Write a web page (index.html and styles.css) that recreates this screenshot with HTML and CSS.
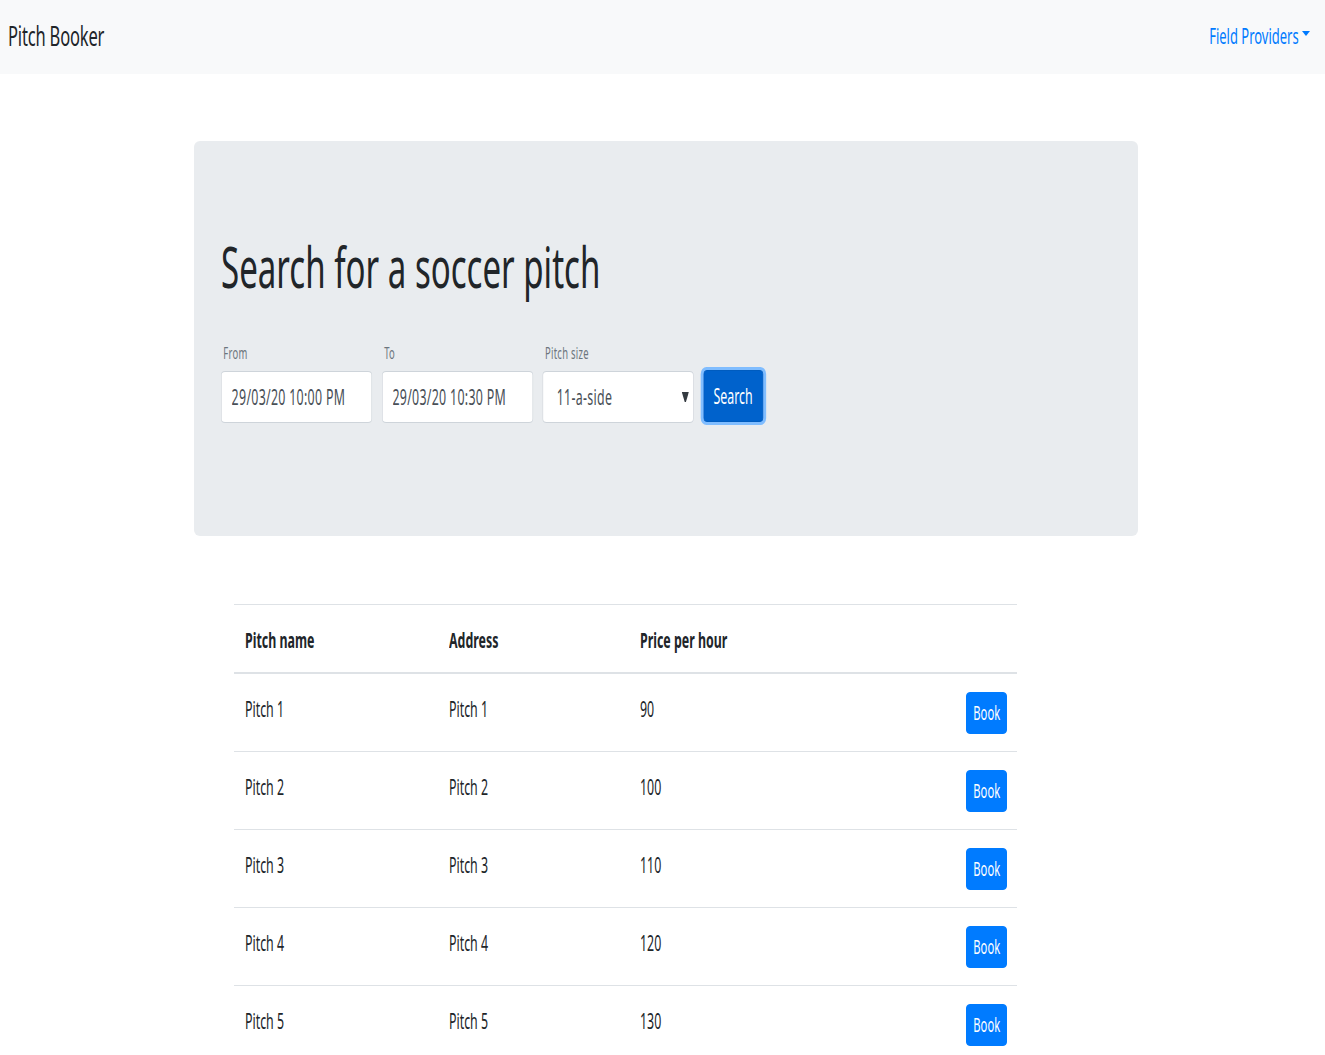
FILE: index.html
```html
<!DOCTYPE html>
<html lang="en">
<head>
<meta charset="utf-8">
<title>Pitch Booker</title>
<link rel="stylesheet" href="styles.css">
</head>
<body>
<nav class="navbar">
  <a class="brand" href="#"><span class="sx">Pitch Booker</span></a>
  <a class="nav-link" href="#"><span class="sx sx-r">Field Providers</span><span class="caret"></span></a>
</nav>
<main class="container">
  <section class="jumbotron">
    <h1 class="display"><span class="sx">Search for a soccer pitch</span></h1>
    <form class="search-form">
      <div class="field">
        <label class="field-label">From</label>
        <input class="field-input" type="text" value="29/03/20 10:00 PM">
      </div>
      <div class="field">
        <label class="field-label">To</label>
        <input class="field-input" type="text" value="29/03/20 10:30 PM">
      </div>
      <div class="field">
        <label class="field-label">Pitch size</label>
        <div class="select-wrap">
          <select class="field-input field-select">
            <option>11-a-side</option>
          </select>
          <svg class="select-arrow" width="12" height="10" viewBox="0 0 12 10"><path d="M0 0 H12 L7 10 H5 Z" fill="#343a40"/></svg>
        </div>
      </div>
      <button class="btn-search" type="button">Search</button>
    </form>
  </section>
  <table class="pitch-table">
    <thead>
      <tr>
        <th class="col-name"><span class="sx">Pitch name</span></th>
        <th class="col-addr"><span class="sx">Address</span></th>
        <th class="col-price"><span class="sx">Price per hour</span></th>
        <th class="col-action"></th>
      </tr>
    </thead>
    <tbody>
      <tr><td><span class="sx">Pitch 1</span></td><td><span class="sx">Pitch 1</span></td><td><span class="sx">90</span></td><td class="action"><button class="btn-book" type="button"><span class="sx sx-c">Book</span></button></td></tr>
      <tr><td><span class="sx">Pitch 2</span></td><td><span class="sx">Pitch 2</span></td><td><span class="sx">100</span></td><td class="action"><button class="btn-book" type="button"><span class="sx sx-c">Book</span></button></td></tr>
      <tr><td><span class="sx">Pitch 3</span></td><td><span class="sx">Pitch 3</span></td><td><span class="sx">110</span></td><td class="action"><button class="btn-book" type="button"><span class="sx sx-c">Book</span></button></td></tr>
      <tr><td><span class="sx">Pitch 4</span></td><td><span class="sx">Pitch 4</span></td><td><span class="sx">120</span></td><td class="action"><button class="btn-book" type="button"><span class="sx sx-c">Book</span></button></td></tr>
      <tr><td><span class="sx">Pitch 5</span></td><td><span class="sx">Pitch 5</span></td><td><span class="sx">130</span></td><td class="action"><button class="btn-book" type="button"><span class="sx sx-c">Book</span></button></td></tr>
    </tbody>
  </table>
</main>
</body>
</html>
```

FILE: styles.css
```css
/* The reference shows type horizontally condensed (x factor 0.59);
   no condensed face is installed, so text is narrowed with scaleX. */
* { box-sizing: border-box; }
html, body { margin: 0; padding: 0; }
body {
  font-family: "Noto Sans", "Open Sans", sans-serif;
  color: #212529;
  background: #fff;
}
.sx {
  display: inline-block;
  transform: scaleX(0.59);
  transform-origin: 0 50%;
  white-space: nowrap;
}
.sx-r { transform-origin: 100% 50%; }
.sx-c { transform-origin: 50% 50%; }

.navbar {
  height: 74px;
  background: #f8f9fa;
  display: flex;
  align-items: center;
  justify-content: space-between;
  padding: 0 15px 4px 8px;
}
.brand {
  font-size: 28px;
  letter-spacing: -0.3px;
  color: #212529;
  text-decoration: none;
}
.nav-link {
  font-size: 22px;
  color: #007bff;
  text-decoration: none;
  display: flex;
  align-items: center;
}
.caret {
  display: inline-block;
  margin-left: 3px;
  margin-top: -3px;
  width: 0;
  height: 0;
  border-top: 5px solid #007bff;
  border-left: 4px solid transparent;
  border-right: 4px solid transparent;
}

.container {
  padding-left: 194px;
}
.jumbotron {
  width: 944px;
  margin-top: 67px;
  background: #e9ecef;
  border-radius: 6px;
  padding: 92px 27px 113px;
}
.display {
  margin: 0 0 43px;
  font-size: 56px;
  font-weight: 400;
  line-height: 67px;
}

/* the form row is drawn at natural width and narrowed as a unit */
.search-form {
  width: 918.5px;
  display: flex;
  align-items: flex-end;
  transform: scaleX(0.59);
  transform-origin: 0 0;
}
.field {
  display: flex;
  flex-direction: column;
  flex: 0 0 256px;
  margin-right: 16.5px;
}
.field-label {
  font-size: 16px;
  letter-spacing: 0.5px;
  line-height: 21px;
  color: #6c757d;
  padding-left: 4px;
  margin-bottom: 7px;
}
.field-input {
  height: 52px;
  width: 100%;
  border: 1px solid #ced4da;
  border-width: 1px 1.7px;
  border-radius: 6.8px / 4px;
  background: #fff;
  font-family: inherit;
  font-size: 21px;
  letter-spacing: 0.5px;
  color: #495057;
  padding: 0 17px;
}
.select-wrap { position: relative; }
.field-select {
  appearance: none;
  -webkit-appearance: none;
  padding-left: 23px;
}
.select-arrow {
  position: absolute;
  right: 8px;
  top: 21px;
  pointer-events: none;
}
.btn-search {
  flex: 0 0 101px;
  margin-bottom: 1px;
  height: 52px;
  background: #0062cc;
  border: 1px solid #005cbf;
  border-width: 1px 1.7px;
  border-radius: 6.8px / 4px;
  color: #fff;
  font-family: inherit;
  font-size: 21px;
  padding: 0;
  box-shadow: 2px 0 0 3px #80bdff, -2px 0 0 3px #80bdff;
}

.pitch-table {
  margin: 68px 0 0 40px;
  width: 783px;
  border-collapse: collapse;
  font-size: 21px;
  line-height: 35px;
}
.pitch-table th,
.pitch-table td {
  text-align: left;
  vertical-align: top;
  padding: 18px 10px 17px 11px;
  border-top: 1px solid #dee2e6;
}
.pitch-table thead th {
  border-bottom: 2px solid #dee2e6;
  font-weight: 700;
  line-height: 31.5px;
  padding-top: 20px;
  padding-bottom: 15.5px;
}
.pitch-table tbody tr:first-child td { border-top: 0; }
.col-name { width: 204px; }
.col-addr { width: 191px; }
.col-action { width: 62px; }
.pitch-table td.action {
  text-align: right;
  padding-right: 10px;
}
.btn-book {
  display: inline-block;
  width: 41px;
  height: 42px;
  background: #007bff;
  border: 1px solid #007bff;
  border-radius: 4px;
  color: #fff;
  font-family: inherit;
  font-size: 19px;
  line-height: 1;
  padding: 0;
  text-align: center;
  vertical-align: top;
}
.btn-book .sx { margin: 0 -6px; }
```
